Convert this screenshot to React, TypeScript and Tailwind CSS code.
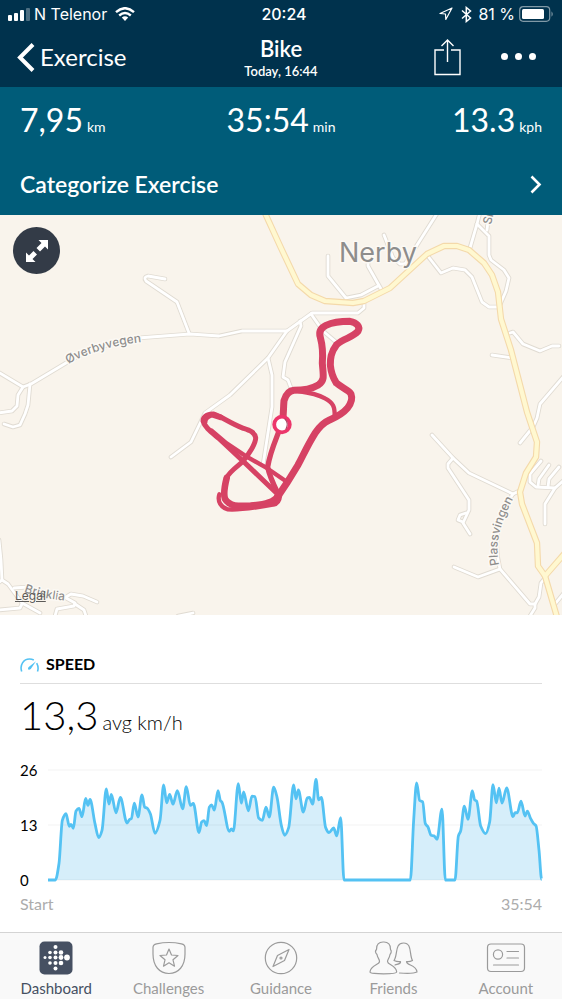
import type { ReactNode } from "react";

const minorRoads = [
  "M-2 372 L23 387 L31 384 L66 363 Q95 345 138 338 L177 335 L190 334 L219 336 L242 331 L287 331",
  "M23 387 L18 395 L17 406 L12 411 L-2 413",
  "M30 384 L28 405 L25 414 L20 425 L13 427 L4 424",
  "M165 279 L148 276 Q143 277 146 281 L177 302 L189 333",
  "M364 301 L364 308 L358 313 L312 313 L287 331 L268 358 L230 395 L205 413 L191 442 L171 457",
  "M268 358 L272 375 L272 407 L263 465",
  "M300 321 L301 326 L285 362 L283 377 L288 380 L291 388",
  "M311 314 L323 331 L336 342",
  "M328 256 L328 276 L346 298 L361 295 L378 286",
  "M381 289 L368 266 L368 262",
  "M384 235 L393 258 L400 264 L406 264",
  "M438 212 L405 264",
  "M427 255 L441 273 L453 268 L465 270 L472 277 L482 302 L489 307 L499 307 L506 291 L509 278 L504 270 L491 260 L489 255 L489 236 L477 224",
  "M480 212 L477 224 L470 248",
  "M489 212 L487 230",
  "M510 333 L513 332 L523 344 L540 351 L552 346 L559 346",
  "M492 355 L513 358",
  "M564 376 L540 404 L537 418 L533 427 L520 443",
  "M432 435 L453 458 L469 473 L513 494 L519 491",
  "M453 458 L448 464 L448 468 L469 500 L469 510 L463 523 L470 534",
  "M466 513 L460 515 L458 520 L463 522",
  "M513 494 L507 503 Q491 535 500 569 L530 604 L535 604 L535 608 L530 616",
  "M500 569 L478 577 L454 567",
  "M535 604 L539 597 L541 583 L545 578",
  "M555 604 L564 593",
  "M541 461 L530 474 L530 482 L536 487 L555 488 L564 480",
  "M549 465 L539 479 L538 486",
  "M559 467 L549 479 L548 487",
  "M555 488 L545 504 L545 524",
  "M-1 540 L1 560 L2 580 L8 584 L22 603 L40 613",
  "M2 580 L-3 584",
  "M14 588 L28 587",
  "M22 604 L20 608 L-2 610",
  "M66 597 L71 594 L83 596 L97 602",
  "M66 598 L75 603 L74 606 L57 609 L55 616",
  "M75 604 L84 610 L86 616",
  "M178 616 L193 613",
];

const mainRoads = [
  "M264 211 L281 248 L298 284 L311 295 L325 301 L353 303 L364 301 L390 288 L427 254 L444 246 L457 246 L469 250 L484 263 L492 275 L498 292 L501 319 L511 350 L527 412 L537 442 L536 457 L526 473 L520 492 L522 504 L537 543 L538 566 L545 576 L557 617",
  "M545 576 L565 553",
];

const speedSamples: [number, number][] = [
  [143, 720], [165, 720], [176, 670], [186, 540], [197, 520], [207, 558], [212, 552], [219, 564],
  [227, 512], [236, 504], [245, 529], [256, 474], [263, 495], [269, 477], [284, 550], [295, 592],
  [305, 570], [318, 445], [326, 491], [333, 462], [347, 517], [360, 471], [380, 548], [388, 537],
  [393, 535], [402, 488], [413, 530], [425, 463], [433, 500], [440, 503], [450, 520], [464, 579],
  [479, 540], [490, 433], [499, 487], [508, 462], [518, 491], [531, 450], [547, 505], [558, 438],
  [570, 495], [579, 489], [596, 577], [604, 545], [611, 541], [619, 556], [627, 500], [634, 493],
  [642, 509], [653, 450], [660, 480], [665, 485], [687, 573], [693, 566], [699, 572], [714, 429],
  [723, 488], [730, 454], [744, 511], [755, 467], [764, 468], [775, 533], [786, 540], [797, 500],
  [807, 530], [820, 440], [830, 470], [843, 555], [853, 585], [865, 562], [880, 433], [887, 475],
  [894, 448], [909, 515], [921, 472], [927, 471], [937, 491], [947, 416], [955, 478], [963, 471],
  [976, 562], [986, 577], [1000, 563], [1009, 587], [1021, 532], [1031, 720], [1230, 720],
  [1240, 540], [1249, 427], [1258, 480], [1267, 484], [1275, 550], [1283, 560], [1292, 585],
  [1301, 587], [1310, 597], [1325, 506], [1335, 720], [1364, 720], [1374, 588], [1381, 572],
  [1392, 497], [1403, 537], [1416, 451], [1423, 478], [1429, 482], [1441, 557], [1456, 580],
  [1468, 545], [1478, 432], [1488, 487], [1496, 443], [1505, 488], [1519, 442], [1538, 529],
  [1544, 517], [1551, 517], [1562, 482], [1574, 527], [1581, 512], [1591, 535], [1600, 550],
  [1607, 556], [1616, 630], [1624, 718],
];

// Cubic interpolation that never overshoots a sample, so peaks stay at their values.
function smoothPath(points: [number, number][]) {
  const slope = (i: number) =>
    (points[i + 1][1] - points[i][1]) / (points[i + 1][0] - points[i][0]);
  const tangents = points.map((_, i) => {
    if (i === 0 || i === points.length - 1) return 0;
    const before = slope(i - 1);
    const after = slope(i);
    return before * after <= 0 ? 0 : (2 * before * after) / (before + after);
  });
  let d = `M${points[0][0]} ${points[0][1]}`;
  for (let i = 1; i < points.length; i++) {
    const [x0, y0] = points[i - 1];
    const [x1, y1] = points[i];
    const third = (x1 - x0) / 3;
    d += ` C${x0 + third} ${y0 + tangents[i - 1] * third} ${x1 - third} ${y1 - tangents[i] * third} ${x1} ${y1}`;
  }
  return d;
}

const speedLine = smoothPath(speedSamples);

function StatusBar() {
  return (
    <div className="grid h-7 grid-cols-3 items-center px-2 font-['Inter',sans-serif] text-base">
      <div className="flex items-center gap-1">
        <svg width="22" height="13" viewBox="0 0 22 13" fill="#fff" aria-hidden="true">
          <rect x="0" y="7" width="4" height="6" rx="1" />
          <rect x="6" y="5" width="4" height="8" rx="1" />
          <rect x="12" y="2" width="4" height="11" rx="1" />
          <rect x="18" y="0" width="4" height="13" rx="1" opacity=".3" />
        </svg>
        <span className="whitespace-nowrap">N Telenor</span>
        <svg className="ml-1" width="20" height="14" viewBox="0 0 20 14" fill="none" stroke="#fff" strokeWidth="2.4" aria-hidden="true">
          <path d="M1 5.2Q10-2.8 19 5.2M4.2 8.5Q10 3.5 15.8 8.5" />
          <path d="M6.8 10.6Q10 7.8 13.2 10.6L10 14Z" fill="#fff" stroke="none" />
        </svg>
      </div>
      <div className="pl-[6px] text-center font-medium">20:24</div>
      <div className="flex items-center justify-end gap-1">
        <svg width="14" height="14" viewBox="0 0 14 14" fill="none" stroke="#fff" strokeWidth="1.2" strokeLinejoin="round" aria-hidden="true">
          <path d="M13 1 1 6.500 6.500 7 6.800 12.500Z" />
        </svg>
        <svg className="ml-1" width="11" height="17" viewBox="0 0 11 17" fill="none" stroke="#fff" strokeWidth="1.5" aria-hidden="true">
          <path d="M1 4.500 9.500 12 5.300 15.500V1.500L9.500 5 1 12.500" />
        </svg>
        <span className="ml-0.5 whitespace-nowrap">81 %</span>
        <svg width="35" height="16" viewBox="0 0 35 16" aria-hidden="true">
          <rect x=".7" y=".7" width="30" height="14.6" rx="3.5" fill="none" stroke="#fff" strokeWidth="1.2" opacity=".5" />
          <rect x="3" y="3" width="22" height="10" rx="1.5" fill="#fff" />
          <path d="M32.5 5.2Q35 8 32.5 10.8Z" fill="#fff" opacity=".5" />
        </svg>
      </div>
    </div>
  );
}

function NavBar() {
  return (
    <div className="grid h-[59px] grid-cols-3 items-center pr-[26px] pb-[2px] pl-4">
      <button type="button" className="flex items-center gap-1 text-2xl">
        <svg width="20" height="30" viewBox="0 0 20 30" fill="none" stroke="#fff" strokeWidth="4" aria-hidden="true">
          <path d="M17 2.500 4 15.500 17 28.500" />
        </svg>
        Exercise
      </button>
      <div className="pt-1 pl-[10px] text-center">
        <h1 className="text-[22px] leading-6 font-semibold">Bike</h1>
        <p className="text-[13px] leading-5 font-semibold">Today, 16:44</p>
      </div>
      <div className="flex items-center justify-end gap-10">
        <button type="button" aria-label="Share">
          <svg width="27" height="38" viewBox="0 0 27 38" fill="none" stroke="#fff" strokeWidth="1.4">
            <path d="M10 12H1V36.500H26V12H17M13.500 24V2M7.500 8 13.500 2 19.500 8" />
          </svg>
        </button>
        <button type="button" aria-label="More options" className="flex gap-[7px]">
          <span className="size-[7px] rounded-full bg-white" />
          <span className="size-[7px] rounded-full bg-white" />
          <span className="size-[7px] rounded-full bg-white" />
        </button>
      </div>
    </div>
  );
}

function Stat({ value, unit }: { value: string; unit: string }) {
  return (
    <div className="flex items-baseline gap-1">
      <span className="text-[32px] leading-10">{value}</span>
      <span className="text-sm">{unit}</span>
    </div>
  );
}

function RouteMap() {
  return (
    <section aria-label="Route map" className="relative h-[400px] overflow-hidden bg-[#f9f4ec]">
      <svg className="h-full w-full font-['Inter',sans-serif]" viewBox="0 215 562 400" preserveAspectRatio="xMidYMid slice" fill="none" strokeLinejoin="round" strokeLinecap="round">
        <defs>
          <path id="overby" d="M68 364 Q98 347 142 342" />
          <path id="plass" d="M499 565 Q492 535 515 496" />
          <path id="bris" d="M24 592 Q42 599 70 601" />
          <path id="sn" d="M491 225 L497 199" />
        </defs>
        {minorRoads.map((d) => <path key={d} d={d} stroke="#e0dbd2" strokeWidth="4.600" />)}
        {minorRoads.map((d) => <path key={d} d={d} stroke="#fff" strokeWidth="2.800" />)}
        {mainRoads.map((d) => <path key={d} d={d} stroke="#f4d9aa" strokeWidth="6.400" />)}
        {mainRoads.map((d) => <path key={d} d={d} stroke="#fff8d0" strokeWidth="4.200" />)}

        <g fill="#8e8d8c" stroke="#fcf9f4" strokeWidth="3" paintOrder="stroke" fontSize="12" fontWeight="500">
          <text><textPath href="#overby">Øverbyvegen</textPath></text>
          <text><textPath href="#plass">Plassvingen</textPath></text>
          <text><textPath href="#bris">Brisklia</textPath></text>
          <text><textPath href="#sn">Sn</textPath></text>
          <text x="339" y="262" fontSize="27" fontWeight="400">Nerby</text>
        </g>

        <g transform="translate(190 310) scale(.3333)" stroke="#d64264">
          <path strokeWidth="21" d="M278 330C281 310 280 295 282 272C288 252 300 242 312 241C345 241 368 235 385 225C405 211 400 198 397 160C400 120 396 100 391 82C386 66 392 54 408 46C430 36 455 34 480 34C500 38 512 50 504 64C488 83 462 84 440 104C422 128 421 145 421 165C423 187 430 205 439 219C456 234 477 240 483 252C489 268 484 280 472 295C455 315 435 323 417 331C396 340 386 354 375 370C352 407 344 427 324 465L290 520L262 562" />
          <path strokeWidth="13" d="M325 243C365 249 385 254 405 265C430 278 435 291 434 318" />
          <path strokeWidth="16" d="M272 350C258 389 241 423 233 471C239 501 252 526 266 555" />
          <path strokeWidth="20" d="M262 560C250 580 217 584 182 587C145 589 118 590 105 567C99 550 104 528 110 504" />
          <path strokeWidth="15" d="M110 504C115 488 142 469 157 456C177 433 198 400 197 383C194 366 178 361 160 355C115 337 91 317 70 312C48 312 39 322 39 333C45 354 66 368 85 384L157 451L260 550" />
          <path strokeWidth="13" d="M65 362L110 400L165 437L230 474L288 514" />
          <path strokeWidth="13" d="M88 553C81 575 94 592 112 598C155 601 205 592 250 584Q268 580 270 558" />
          <path strokeWidth="17" d="M44 335Q44 322 65 314L91 322" />
        </g>
        <circle cx="282" cy="424.500" r="7.800" fill="#fff" stroke="#ec366b" strokeWidth="3.800" />
        <path d="M285 419Q289 423 286 429" stroke="#ad4665" strokeWidth="1.200" />
      </svg>

      <button type="button" aria-label="Expand map" className="absolute top-3 left-[13px] grid size-[47px] place-items-center rounded-full bg-[#333b47]">
        <svg width="24" height="24" viewBox="0 0 24 24" fill="#fff">
          <path d="M13.500 1H23V10.500L20 7.500 15 12.500 11.500 9 16.500 4ZM10.500 23H1V13.500L4 16.500 8.500 12 12 15.500 7.500 20Z" />
        </svg>
      </button>
      <a href="#legal" className="absolute bottom-[11px] left-[15px] font-['Inter',sans-serif] text-xs leading-4 text-[#5c5a58] underline">Legal</a>
    </section>
  );
}

function SpeedPanel() {
  return (
    <section className="px-5 pt-[39px] pb-4 text-black">
      <div className="flex h-[30px] items-start gap-[7px] border-b border-[#dedede]">
        <svg className="mt-1" width="19" height="14" viewBox="0 0 19 14" fill="none" stroke="#54c2f3" strokeWidth="1.600" aria-hidden="true">
          <path d="M1.700 13.500C-.5 7 3.500 1 9.500 1Q11.800 1 13.800 2M16.700 5.200Q19 9.500 17.500 13.500" />
          <path d="M16 3.300 10.800 11Q9 12.500 8.200 11.300 7.400 10 9 8.800Z" fill="#54c2f3" stroke="none" />
        </svg>
        <h2 className="text-base leading-5 font-bold">SPEED</h2>
      </div>
      <p className="mt-[6px] flex items-baseline gap-1 font-light">
        <span className="text-[40px] leading-[50px]">13,3</span>
        <span className="text-xl">avg km/h</span>
      </p>
      <div className="mt-[30px] flex gap-3">
        <div className="-my-2 flex w-4 flex-col justify-between text-[15px] leading-4">
          <span>26</span>
          <span>13</span>
          <span>0</span>
        </div>
        <svg className="h-[110px] min-w-0 flex-1 overflow-visible" viewBox="143 388 1482 332" preserveAspectRatio="none" fill="none" role="img" aria-label="Speed over time">
          <path d={`${speedLine} L1624 720 L143 720Z`} fill="#d6eefa" />
          <path d="M143 388H1625M143 554H1625M143 720H1625" stroke="#000" strokeOpacity=".05" vectorEffect="non-scaling-stroke" />
          <path d={speedLine} stroke="#54c2f3" strokeWidth="2.800" strokeLinejoin="round" vectorEffect="non-scaling-stroke" />
        </svg>
      </div>
      <div className="mt-[14px] flex justify-between text-base leading-5 text-[#acacac]">
        <span>Start</span>
        <span>35:54</span>
      </div>
    </section>
  );
}

const fitbitDots: [number, number, number][] = [
  [5, 16.5, 1.5], [10, 11.5, 1.8], [10, 16.5, 1.8], [10, 22, 1.8],
  [15.500, 6, 2], [15.500, 11.500, 2], [15.500, 16.500, 2], [15.500, 22, 2], [15.500, 27.500, 2],
  [21, 11.500, 2.3], [21, 16.500, 2.4], [21, 22, 2.3], [27, 16.500, 2.900],
];

function Tab({ label, active, children }: { label: string; active?: boolean; children: ReactNode }) {
  return (
    <a href={`#${label}`} aria-current={active ? "page" : undefined} className={`flex min-w-0 flex-1 flex-col items-center gap-[3px] pt-2 text-[15px] leading-5 ${active ? "text-[#465062]" : "text-[#9b9b9b]"}`}>
      <svg width="50" height="34" viewBox="0 0 50 34" fill="none" stroke="currentColor" strokeWidth="1.200" strokeLinejoin="round" strokeLinecap="round" aria-hidden="true">
        {children}
      </svg>
      {label}
    </a>
  );
}

function TabBar() {
  return (
    <nav className="flex h-[67px] border-t border-[#d4d4d4] bg-[#f9f9f9]">
      <Tab label="Dashboard" active>
        <rect x="8.500" y=".5" width="33" height="33" rx="5" fill="currentColor" stroke="none" />
        <g transform="translate(9 0)" fill="#fff" stroke="none">
          {fitbitDots.map(([x, y, r]) => <circle key={`${x}-${y}`} cx={x} cy={y} r={r} />)}
        </g>
      </Tab>
      <Tab label="Challenges">
        <path d="M12.500 2.800Q25 .2 37.500 2.800 41 3.500 41 6.500V13C41 25 34.500 32.500 25 32.500S9 25 9 13V6.500Q9 3.500 12.500 2.800Z" />
        <path d="M25 8 27.500 14 34 14.500 29 18.800 30.500 25.200 25 21.800 19.500 25.200 21 18.800 16 14.500 22.500 14Z" />
      </Tab>
      <Tab label="Guidance">
        <circle cx="25" cy="17" r="15.700" />
        <path d="M33 8.500 28.500 19.500 17 25.500 21.500 14.500Z" />
        <circle cx="25" cy="17" r="1" />
      </Tab>
      <Tab label="Friends">
        <path d="M15.500 1C20 .8 23 3.500 22.500 8.500 24 10 23 12.500 22 13.500 21.500 17 19.500 18.500 19.500 20.500 19.500 24 28 24 28.700 31 28.700 32.500 22 32.800 15.500 32.800S2 32.500 2 31C2.700 24 11.500 24 11.500 20.500 11.500 18 9.500 17 9 13.500 7.500 12 7 10 8.500 8.500 8 3.500 11 .8 15.500 1Z" />
        <path d="M27 24C30 23 33 23 32.500 20.500Q29.500 21 26 19.500C30 14 26.500 2 35.500 2S41 14 44.500 19.500Q41.500 21 38.500 20.500C38.500 25 48 23 49 31Q45 33 31.500 32" />
      </Tab>
      <Tab label="Account">
        <rect x="6.500" y="3" width="37" height="27.500" rx="3.500" />
        <circle cx="17" cy="13.500" r="4.600" />
        <path d="M26 10.500H37.500M26 17H37.500M12.500 24H37.500" />
      </Tab>
    </nav>
  );
}

export default function App() {
  return (
    <div className="flex min-h-screen flex-col bg-white font-['Lato',sans-serif]">
      <header className="bg-[#00324d] text-white">
        <StatusBar />
        <NavBar />
      </header>
      <section className="bg-[#005c79] text-white">
        <div className="grid grid-cols-3 px-5 pt-[13px]">
          <Stat value="7,95" unit="km" />
          <div className="flex justify-center"><Stat value="35:54" unit="min" /></div>
          <div className="flex justify-end"><Stat value="13.3" unit="kph" /></div>
        </div>
        <button type="button" className="mt-[13px] flex h-[62px] w-full items-center justify-between px-5 text-[23px] font-semibold">
          Categorize Exercise
          <svg width="13" height="19" viewBox="0 0 13 19" fill="none" stroke="#fff" strokeWidth="2.600" aria-hidden="true">
            <path d="M2.500 1.500 10.500 9.500 2.500 17.500" />
          </svg>
        </button>
      </section>
      <main className="flex-1">
        <RouteMap />
        <SpeedPanel />
      </main>
      <TabBar />
    </div>
  );
}
